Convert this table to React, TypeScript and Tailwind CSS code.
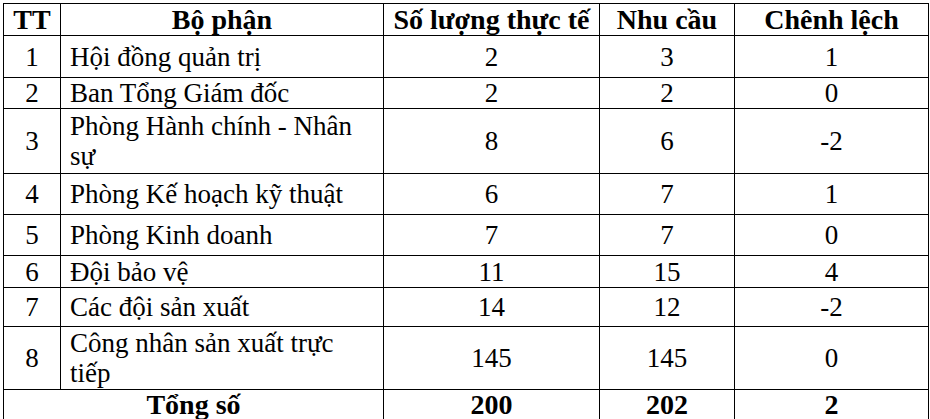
const rows = [
  { tt: '1', name: ['Hội đồng quản trị'], actual: '2', need: '3', diff: '1', h: 'h-[42px]' },
  { tt: '2', name: ['Ban Tổng Giám đốc'], actual: '2', need: '2', diff: '0', h: 'h-[30px]' },
  { tt: '3', name: ['Phòng Hành chính - Nhân', 'sự'], actual: '8', need: '6', diff: '-2', h: 'h-[65px]' },
  { tt: '4', name: ['Phòng Kế hoạch kỹ thuật'], actual: '6', need: '7', diff: '1', h: 'h-[41px]' },
  { tt: '5', name: ['Phòng Kinh doanh'], actual: '7', need: '7', diff: '0', h: 'h-[41px]' },
  { tt: '6', name: ['Đội bảo vệ'], actual: '11', need: '15', diff: '4', h: 'h-[32px]' },
  { tt: '7', name: ['Các đội sản xuất'], actual: '14', need: '12', diff: '-2', h: 'h-[39px]' },
  { tt: '8', name: ['Công nhân sản xuất trực', 'tiếp'], actual: '145', need: '145', diff: '0', h: 'h-[63px]' },
];

export default function App() {
  return (
    <div className="w-[930px] h-[419px] bg-white pt-[3px] pl-[3px] overflow-hidden font-['Liberation_Serif','Times_New_Roman',serif]">
      <table className="table-fixed border-collapse text-black text-[27px] leading-[30px] w-[925px]">
        <colgroup>
          <col className="w-[57px]" />
          <col className="w-[323px]" />
          <col className="w-[216px]" />
          <col className="w-[135px]" />
          <col className="w-[194px]" />
        </colgroup>
        <thead>
          <tr className="h-[32px] font-bold text-[28px]">
            <th className="border border-black p-0 text-center">TT</th>
            <th className="border border-black p-0 text-center">Bộ phận</th>
            <th className="border border-black p-0 text-center">Số lượng thực tế</th>
            <th className="border border-black p-0 text-center">Nhu cầu</th>
            <th className="border border-black p-0 text-center">Chênh lệch</th>
          </tr>
        </thead>
        <tbody>
          {rows.map((r) => (
            <tr key={r.tt} className={r.h}>
              <td className="border border-black p-0 text-center align-middle">{r.tt}</td>
              <td className="border border-black py-0 pl-[9px] pr-1 text-left align-middle">
                {r.name.map((line, i) => (
                  <div key={i}>{line}</div>
                ))}
              </td>
              <td className="border border-black p-0 text-center align-middle">{r.actual}</td>
              <td className="border border-black p-0 text-center align-middle">{r.need}</td>
              <td className="border border-black p-0 text-center align-middle">{r.diff}</td>
            </tr>
          ))}
          <tr className="h-[29px] font-bold text-[28px]">
            <td colSpan={2} className="border border-black p-0 text-center align-middle">
              Tổng số
            </td>
            <td className="border border-black p-0 text-center align-middle">200</td>
            <td className="border border-black p-0 text-center align-middle">202</td>
            <td className="border border-black p-0 text-center align-middle">2</td>
          </tr>
        </tbody>
      </table>
    </div>
  );
}
